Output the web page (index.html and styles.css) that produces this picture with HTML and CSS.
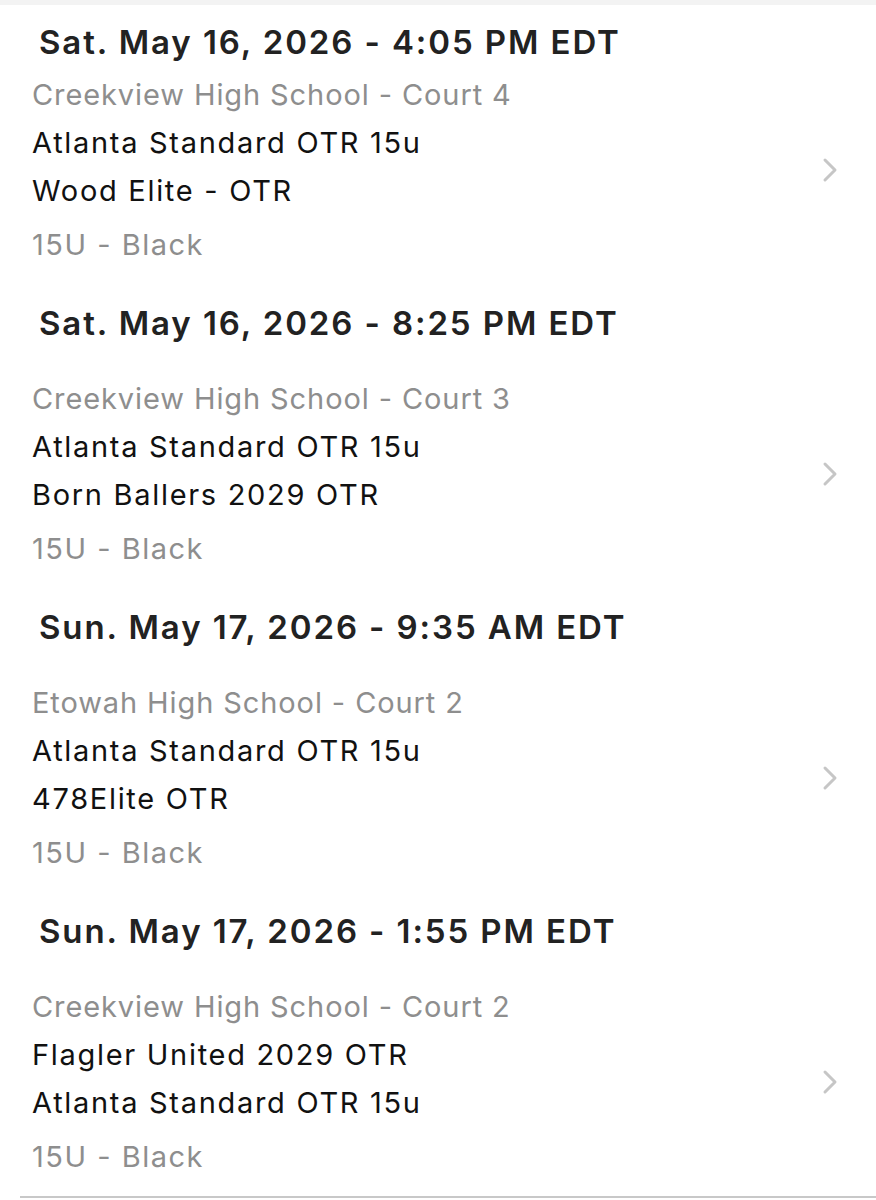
FILE: index.html
```html
<!DOCTYPE html>
<html lang="en">
  <head>
    <meta charset="UTF-8" />
    <meta name="viewport" content="width=device-width, initial-scale=1.0" />
    <title>Schedule</title>
    <link rel="stylesheet" href="styles.css">
  </head>
  <body>
    <div class="schedule">
      <div class="game first">
        <div class="game-date">Sat. May 16, 2026 - 4:05 PM EDT</div>
        <div class="game-row">
          <div class="game-info">
            <p class="venue">Creekview High School - Court 4</p>
            <p class="team">Atlanta Standard OTR 15u</p>
            <p class="team">Wood Elite - OTR</p>
            <p class="division">15U - Black</p>
          </div>
          <svg class="chevron" width="16" height="26" viewBox="0 0 16 26"><path d="M3 3 L13 13 L3 23" /></svg>
        </div>
      </div>

      <div class="game">
        <div class="game-date">Sat. May 16, 2026 - 8:25 PM EDT</div>
        <div class="game-row">
          <div class="game-info">
            <p class="venue">Creekview High School - Court 3</p>
            <p class="team">Atlanta Standard OTR 15u</p>
            <p class="team">Born Ballers 2029 OTR</p>
            <p class="division">15U - Black</p>
          </div>
          <svg class="chevron" width="16" height="26" viewBox="0 0 16 26"><path d="M3 3 L13 13 L3 23" /></svg>
        </div>
      </div>

      <div class="game">
        <div class="game-date">Sun. May 17, 2026 - 9:35 AM EDT</div>
        <div class="game-row">
          <div class="game-info">
            <p class="venue">Etowah High School - Court 2</p>
            <p class="team">Atlanta Standard OTR 15u</p>
            <p class="team">478Elite OTR</p>
            <p class="division">15U - Black</p>
          </div>
          <svg class="chevron" width="16" height="26" viewBox="0 0 16 26"><path d="M3 3 L13 13 L3 23" /></svg>
        </div>
      </div>

      <div class="game last">
        <div class="game-date">Sun. May 17, 2026 - 1:55 PM EDT</div>
        <div class="game-row">
          <div class="game-info">
            <p class="venue">Creekview High School - Court 2</p>
            <p class="team">Flagler United 2029 OTR</p>
            <p class="team">Atlanta Standard OTR 15u</p>
            <p class="division">15U - Black</p>
          </div>
          <svg class="chevron" width="16" height="26" viewBox="0 0 16 26"><path d="M3 3 L13 13 L3 23" /></svg>
        </div>
      </div>
    </div>
  </body>
</html>
```

FILE: styles.css
```css
body {
  font-family: Inter, "Liberation Sans", Arial, sans-serif;
  margin: 0;
  padding: 0;
  background: #fff;
}
.schedule {
  border-top: 5px solid #f3f3f3;
  padding-top: 13px;
}
.game {
  padding: 0 38px 30px 32px;
}
.game.last {
  padding-bottom: 15px;
}
.game-date {
  padding-left: 7px;
  font-size: 33px;
  line-height: 48px;
  font-weight: 600;
  letter-spacing: 1.9px;
  color: #222;
}
.game-row {
  display: flex;
  align-items: center;
  justify-content: space-between;
  margin-top: 28px;
}
.game.first .game-row {
  margin-top: 5px;
}
.game-info p {
  margin: 0;
  font-size: 29px;
  line-height: 48px;
  letter-spacing: 1.5px;
}
.game-info .venue {
  letter-spacing: 0.9px;
  color: #8e8e8e;
}
.game-info .team {
  letter-spacing: 1.7px;
  color: #111;
}
.game-info .division {
  margin-top: 6px;
  color: #8e8e8e;
}
.chevron {
  fill: none;
  stroke: #c6c6c6;
  stroke-width: 3;
  stroke-linecap: round;
  stroke-linejoin: round;
}
.schedule::after {
  content: "";
  display: block;
  height: 2px;
  margin-left: 20px;
  background: #c8c8c8;
}
```
